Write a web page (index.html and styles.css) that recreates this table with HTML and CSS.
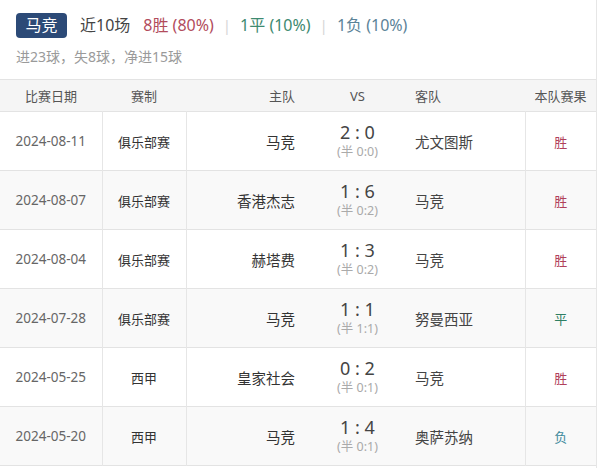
FILE: index.html
```html
<!DOCTYPE html>
<html lang="zh">
<head>
<meta charset="utf-8">
<link rel="stylesheet" href="styles.css">
</head>
<body>
<div class="wrap">
  <div class="summary">
    <div class="line1">
      <span class="badge">马竞</span>
      <span class="recent">近10场</span>
      <span class="win">8胜 (80%)</span>
      <span class="sep">|</span>
      <span class="draw">1平 (10%)</span>
      <span class="sep">|</span>
      <span class="lose">1负 (10%)</span>
    </div>
    <div class="line2">进23球，失8球，净进15球</div>
  </div>
  <table class="games">
    <colgroup>
      <col class="c-date"><col class="c-type"><col class="c-home"><col class="c-vs"><col class="c-away"><col class="c-res">
    </colgroup>
    <thead>
      <tr>
        <th class="date">比赛日期</th>
        <th class="type">赛制</th>
        <th class="home">主队</th>
        <th class="vs">VS</th>
        <th class="away">客队</th>
        <th class="res">本队赛果</th>
      </tr>
    </thead>
    <tbody>
      <tr>
        <td class="date">2024-08-11</td><td class="type">俱乐部赛</td><td class="home">马竞</td>
        <td class="vs"><div class="score">2 : 0</div><div class="half">(半 0:0)</div></td>
        <td class="away">尤文图斯</td><td class="res r-win">胜</td>
      </tr>
      <tr>
        <td class="date">2024-08-07</td><td class="type">俱乐部赛</td><td class="home">香港杰志</td>
        <td class="vs"><div class="score">1 : 6</div><div class="half">(半 0:2)</div></td>
        <td class="away">马竞</td><td class="res r-win">胜</td>
      </tr>
      <tr>
        <td class="date">2024-08-04</td><td class="type">俱乐部赛</td><td class="home">赫塔费</td>
        <td class="vs"><div class="score">1 : 3</div><div class="half">(半 0:2)</div></td>
        <td class="away">马竞</td><td class="res r-win">胜</td>
      </tr>
      <tr>
        <td class="date">2024-07-28</td><td class="type">俱乐部赛</td><td class="home">马竞</td>
        <td class="vs"><div class="score">1 : 1</div><div class="half">(半 1:1)</div></td>
        <td class="away">努曼西亚</td><td class="res r-draw">平</td>
      </tr>
      <tr>
        <td class="date">2024-05-25</td><td class="type">西甲</td><td class="home">皇家社会</td>
        <td class="vs"><div class="score">0 : 2</div><div class="half">(半 0:1)</div></td>
        <td class="away">马竞</td><td class="res r-win">胜</td>
      </tr>
      <tr>
        <td class="date">2024-05-20</td><td class="type">西甲</td><td class="home">马竞</td>
        <td class="vs"><div class="score">1 : 4</div><div class="half">(半 0:1)</div></td>
        <td class="away">奥萨苏纳</td><td class="res r-lose">负</td>
      </tr>
    </tbody>
  </table>
</div>
</body>
</html>
```

FILE: styles.css
```css
html, body {
  margin: 0;
  padding: 0;
  background: #fff;
}
body {
  font-family: "Noto Sans", "Noto Sans CJK SC", sans-serif;
  color: #333;
}
.wrap {
  width: 596px;
  height: 468px;
  border-right: 1px solid #e6e6e6;
  overflow: hidden;
}
.summary {
  height: 79px;
  box-sizing: border-box;
  padding: 13px 16px 0;
}
.line1 {
  display: flex;
  align-items: center;
  height: 25px;
  font-size: 16px;
  line-height: 25px;
  white-space: nowrap;
}
.badge {
  width: 51px;
  height: 25px;
  background: #2c4a77;
  color: #fff;
  border-radius: 4px;
  display: flex;
  align-items: center;
  justify-content: center;
  margin-right: 13px;
}
.recent { color: #444; margin-right: 13px; }
.win { color: #b24c5c; }
.draw { color: #3d8a70; }
.lose { color: #5b8398; }
.sep { color: #d6d6d6; margin: 0 9px; font-size: 15px; }
.line2 {
  margin-top: 10px;
  font-size: 14px;
  line-height: 18px;
  color: #9a9a9a;
}
.games {
  width: 596px;
  border-collapse: collapse;
  table-layout: fixed;
}
.c-date { width: 102px; }
.c-type { width: 84px; }
.c-home { width: 129px; }
.c-vs { width: 85px; }
.c-away { width: 125px; }
.c-res { width: 71px; }
.games thead tr {
  background: #f5f5f5;
  border-top: 1px solid #e3e3e3;
  border-bottom: 1px solid #e3e3e3;
}
.games th {
  height: 31px;
  padding: 0;
  font-weight: normal;
  font-size: 13px;
  color: #555;
}
.games tbody tr {
  border-bottom: 1px solid #e3e3e3;
}
.games tbody tr:nth-child(even) {
  background: #f9f9f9;
}
.games td {
  height: 58px;
  padding: 0;
  font-size: 14px;
  color: #333;
}
.games td.type, .games td.home, .games td.res {
  border-left: 1px solid #e6e6e6;
}
.date { text-align: center; }
td.date { color: #666; font-size: 13.5px; }
.type { text-align: center; }
td.type { font-size: 13px; }
.home { text-align: right; padding-right: 20px !important; }
td.home { font-size: 14.5px; }
.vs { text-align: center; }
.away { text-align: left; padding-left: 15px !important; }
td.away { font-size: 14.5px; color: #444; }
.res { text-align: center; }
td.res { font-size: 13px; }
.score {
  font-size: 18px;
  line-height: 22px;
  color: #444;
}
.half {
  font-size: 12.5px;
  line-height: 18px;
  color: #aaa;
}
.r-win { color: #b0405a !important; }
.r-draw { color: #2f7f63 !important; }
.r-lose { color: #3f8a9c !important; }
```
